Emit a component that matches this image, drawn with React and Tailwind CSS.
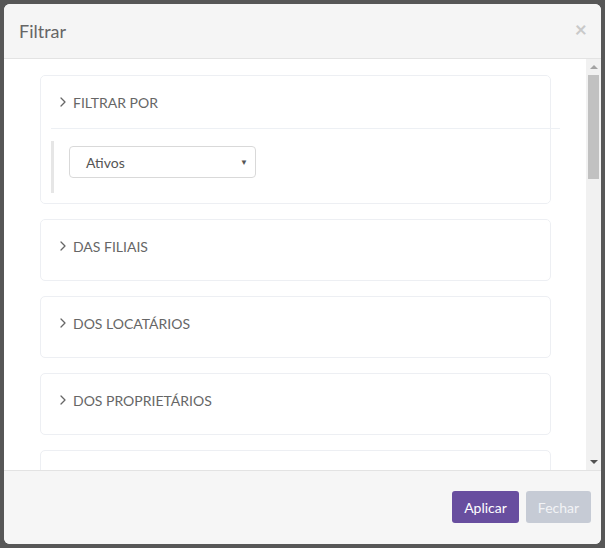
import { ChevronRight } from "lucide-react";

const sections = ["DAS FILIAIS", "DOS LOCATÁRIOS", "DOS PROPRIETÁRIOS"];

const SectionHeader = ({ label }) => (
    <div className="h-[52px] pl-[14px] flex items-center gap-[2px] text-[14px] text-[#666]">
        <ChevronRight size={16} strokeWidth={1.9} className="text-[#666]" />
        <span>{label}</span>
    </div>
);

const App = () => {
    return (
        <div
            className="w-[605px] h-[548px] bg-[#575757] pt-[4px] pl-[4px] overflow-hidden"
            style={{ fontFamily: "Lato, 'Open Sans', sans-serif" }}
        >
            <div className="w-[597px] h-[540px] bg-white rounded-[6px] overflow-hidden flex flex-col">
                {/* Header */}
                <div className="h-[55px] shrink-0 bg-[#f5f5f5] border-b border-[#e3e3e3] flex items-center justify-between pl-[15px] pr-[14px]">
                    <h4 className="text-[18px] text-[#666]">Filtrar</h4>
                    <button className="text-[21px] font-bold leading-none text-[#c9c9c9] -mt-[6px]">×</button>
                </div>

                {/* Body */}
                <div className="h-[411px] shrink-0 flex">
                    <div className="flex-1 overflow-hidden pt-[16px] pl-[36px] pr-[35px] flex flex-col gap-[15px]">
                        <div className="shrink-0 border border-[#edeff3] rounded-[5px]">
                            <SectionHeader label="FILTRAR POR" />
                            <div className="h-px bg-[#edf0f4] ml-[10px] -mr-[10px]" />
                            <div className="mt-[12px] mb-[10px] ml-[10px] border-l-[3px] border-[#e6e6e6] pl-[15px] pt-[5px] pb-[15px]">
                                <div className="w-[187px] h-[32px] border border-[#d9d9d9] rounded-[4px] flex items-center justify-between pl-[16px] pr-[7px] text-[14px] text-[#555]">
                                    <span>Ativos</span>
                                    <span className="text-[8px] text-[#555]">▼</span>
                                </div>
                            </div>
                        </div>
                        {sections.map(s => (
                            <div key={s} className="shrink-0 h-[62px] border border-[#edeff3] rounded-[5px]">
                                <SectionHeader label={s} />
                            </div>
                        ))}
                        <div className="shrink-0 h-[62px] border border-[#edeff3] rounded-[5px]" />
                    </div>

                    {/* Scrollbar */}
                    <div className="w-[15px] bg-[#f1f1f1] flex flex-col items-center">
                        <div className="mt-[6px] w-0 h-0 border-l-[4px] border-r-[4px] border-b-[4px] border-l-transparent border-r-transparent border-b-[#a3a3a3]" />
                        <div className="mt-[6px] w-[11px] h-[104px] bg-[#c1c1c1]" />
                        <div className="flex-1" />
                        <div className="mb-[6px] w-0 h-0 border-l-[4px] border-r-[4px] border-t-[4px] border-l-transparent border-r-transparent border-t-[#505050]" />
                    </div>
                </div>

                {/* Footer */}
                <div className="flex-1 bg-[#f6f6f6] border-t border-[#e3e3e3] flex items-center justify-end gap-[7px] pr-[10px] pb-[1px]">
                    <button className="w-[67px] h-[32px] rounded-[3px] bg-[#684e9f] text-white text-[14px]">Aplicar</button>
                    <button className="w-[65px] h-[32px] rounded-[3px] bg-[#c6cbd5] text-[#f2f3f6] text-[14px]">Fechar</button>
                </div>
            </div>
        </div>
    );
};

export default App;
